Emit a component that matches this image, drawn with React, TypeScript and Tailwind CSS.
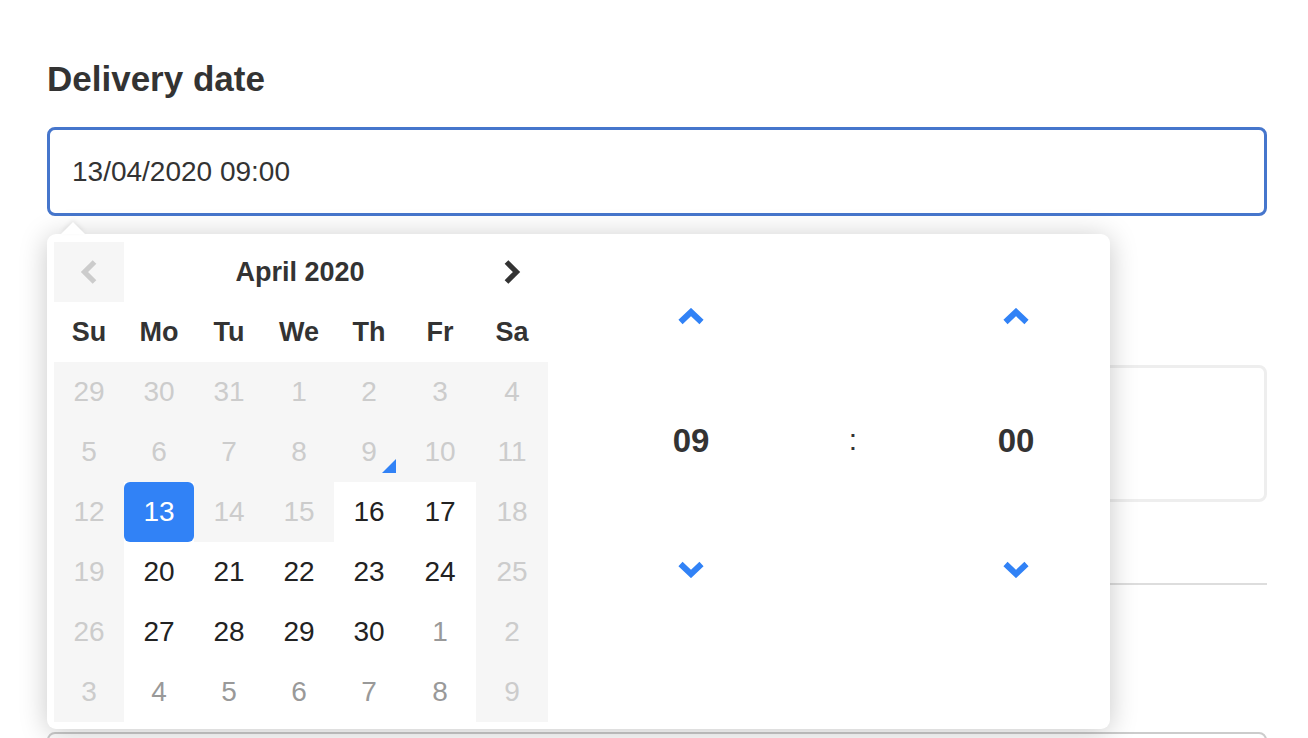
import React from "react";

type Day = { n: number; kind: "dis" | "norm" | "other" | "sel"; today?: boolean };

const rows: Day[][] = [
  [29, 30, 31, 1, 2, 3, 4].map((n) => ({ n, kind: "dis" as const })),
  [5, 6, 7, 8, 9, 10, 11].map((n) => ({ n, kind: "dis" as const, today: n === 9 })),
  [
    { n: 12, kind: "dis" },
    { n: 13, kind: "sel" },
    { n: 14, kind: "dis" },
    { n: 15, kind: "dis" },
    { n: 16, kind: "norm" },
    { n: 17, kind: "norm" },
    { n: 18, kind: "dis" },
  ],
  [
    { n: 19, kind: "dis" },
    { n: 20, kind: "norm" },
    { n: 21, kind: "norm" },
    { n: 22, kind: "norm" },
    { n: 23, kind: "norm" },
    { n: 24, kind: "norm" },
    { n: 25, kind: "dis" },
  ],
  [
    { n: 26, kind: "dis" },
    { n: 27, kind: "norm" },
    { n: 28, kind: "norm" },
    { n: 29, kind: "norm" },
    { n: 30, kind: "norm" },
    { n: 1, kind: "other" },
    { n: 2, kind: "dis" },
  ],
  [
    { n: 3, kind: "dis" },
    { n: 4, kind: "other" },
    { n: 5, kind: "other" },
    { n: 6, kind: "other" },
    { n: 7, kind: "other" },
    { n: 8, kind: "other" },
    { n: 9, kind: "dis" },
  ],
];

function DayCell({ d }: { d: Day }) {
  if (d.kind === "sel") {
    return (
      <div className="h-[60px] bg-white">
        <div className="h-full w-full rounded-[6px] bg-[#3182f6] text-white flex items-center justify-center">
          {d.n}
        </div>
      </div>
    );
  }
  const cls =
    d.kind === "dis"
      ? "bg-[#f6f6f6] text-[#cccccc]"
      : d.kind === "other"
      ? "bg-white text-[#999999]"
      : "bg-white text-[#222222]";
  return (
    <div className={`relative h-[60px] flex items-center justify-center ${cls}`}>
      {d.n}
      {d.today && (
        <span className="absolute right-[8px] bottom-[9px] w-0 h-0 border-l-[14px] border-l-transparent border-b-[14px] border-b-[#3182f6]" />
      )}
    </div>
  );
}

function ChevronLeft({ color }: { color: string }) {
  return (
    <svg width="18" height="26" viewBox="0 0 18 26" fill="none">
      <polyline points="14.5,3 4.5,13 14.5,23" stroke={color} strokeWidth="5.2" strokeLinejoin="miter" />
    </svg>
  );
}

function ChevronRight({ color }: { color: string }) {
  return (
    <svg width="18" height="26" viewBox="0 0 18 26" fill="none">
      <polyline points="3.5,3 13.5,13 3.5,23" stroke={color} strokeWidth="5.2" strokeLinejoin="miter" />
    </svg>
  );
}

function ChevronUp() {
  return (
    <svg width="26" height="17" viewBox="0 0 26 17" fill="none">
      <polyline points="2.5,14 13,4 23.5,14" stroke="#3182f6" strokeWidth="6" strokeLinejoin="miter" />
    </svg>
  );
}

function ChevronDown() {
  return (
    <svg width="26" height="17" viewBox="0 0 26 17" fill="none">
      <polyline points="2.5,3 13,13 23.5,3" stroke="#3182f6" strokeWidth="6" strokeLinejoin="miter" />
    </svg>
  );
}

function TimeCol({ value, w }: { value: string; w: string }) {
  return (
    <div className={`flex flex-col ${w}`}>
      <div className="h-[148px] flex items-center justify-center">
        <ChevronUp />
      </div>
      <div className="h-[100px] flex items-center justify-center text-[33px] leading-none font-bold text-[#333333]">
        {value}
      </div>
      <div className="h-[158px] flex items-center justify-center">
        <ChevronDown />
      </div>
    </div>
  );
}

export default function App() {
  return (
    <div
      className="min-h-[738px] bg-white pl-[47px] pr-[41px] pt-[61px] text-[#333333]"
      style={{ fontFamily: '"Liberation Sans", Arial, Helvetica, sans-serif' }}
    >
      <h2 className="text-[35px] leading-[35px] font-bold text-[#333333]">Delivery date</h2>

      <div className="relative mt-[31px]">
        <div className="h-[89px] border-[3px] border-[#4676cc] rounded-[8px] pl-[22px] flex items-center text-[28px] text-[#333333]">
          13/04/2020 09:00
        </div>

        {/* date-time popup */}
        <div className="absolute left-0 top-[107px] z-10 w-[1063px] h-[495px] bg-white rounded-[9px] shadow-[0_3px_28px_rgba(0,0,0,0.22)] pt-[8px] pl-[7px] flex">
          <span className="absolute left-[14px] -top-[12px] w-0 h-0 border-l-[12px] border-r-[12px] border-b-[12px] border-l-transparent border-r-transparent border-b-white drop-shadow-[0_-2px_2px_rgba(0,0,0,0.08)]" />

          <div className="w-[494px] text-[28px]">
            <div className="grid grid-cols-[70px_70px_70px_70px_70px_72px_72px]">
              <div className="h-[60px] bg-[#f6f6f6] flex items-center justify-center">
                <ChevronLeft color="#cccccc" />
              </div>
              <div className="col-span-5 h-[60px] flex items-center justify-center font-bold text-[27px] text-[#333333]">
                April 2020
              </div>
              <div className="h-[60px] flex items-center justify-center">
                <ChevronRight color="#333333" />
              </div>
              {["Su", "Mo", "Tu", "We", "Th", "Fr", "Sa"].map((w) => (
                <div key={w} className="h-[60px] flex items-center justify-center font-bold text-[27px] text-[#333333]">
                  {w}
                </div>
              ))}
              {rows.map((r, i) => r.map((d, j) => <DayCell key={`${i}-${j}`} d={d} />))}
            </div>
          </div>

          <div className="ml-[93px] flex">
            <TimeCol value="09" w="w-[100px]" />
            <div className="w-[224px] flex flex-col">
              <div className="h-[148px]" />
              <div className="h-[100px] flex items-center justify-center text-[30px] leading-none text-[#333333]">:</div>
            </div>
            <TimeCol value="00" w="w-[102px]" />
          </div>
        </div>
      </div>

      {/* content behind the popup */}
      <div className="mt-[149px] h-[137px] border-[3px] border-[#eeeeee] rounded-[8px]" />
      <div className="mt-[81px] h-[2px] bg-[#dddddd]" />
      <div className="mt-[147px] h-[60px] border-2 border-[#cccccc] rounded-[8px]" />
    </div>
  );
}
